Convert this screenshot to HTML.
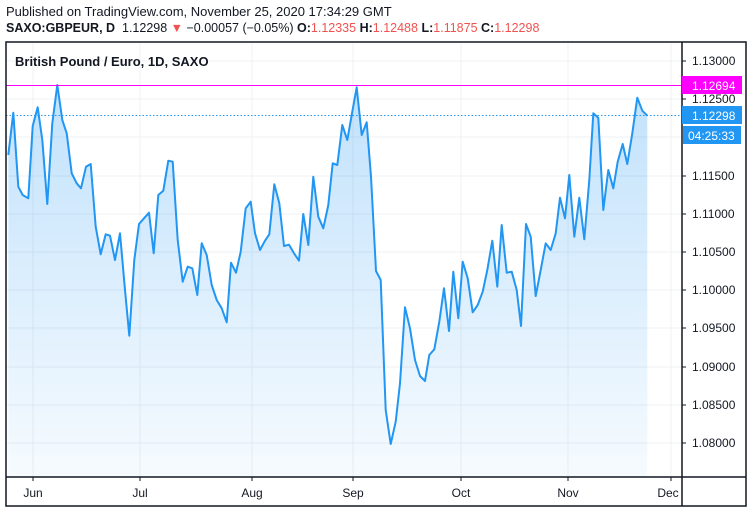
<!DOCTYPE html>
<html><head><meta charset="utf-8"><style>
body{margin:0;width:753px;height:513px;background:#fff;font-family:"Liberation Sans",sans-serif;overflow:hidden;position:relative}
.t{position:absolute;white-space:nowrap;color:#131722}
</style></head><body>
<div class="t" style="left:6px;top:4px;font-size:13px;">Published on TradingView.com, November 25, 2020 17:34:29 GMT</div>
<div class="t" style="left:6px;top:21px;font-size:12.5px;"><b>SAXO:GBPEUR, D</b>&nbsp; 1.12298 <span style="color:#ef5350">▼</span> −0.00057 (−0.05%) <b>O:</b><span style="color:#ef5350">1.12335</span> <b>H:</b><span style="color:#ef5350">1.12488</span> <b>L:</b><span style="color:#ef5350">1.11875</span> <b>C:</b><span style="color:#ef5350">1.12298</span></div>
<svg style="position:absolute;left:0;top:0" width="753" height="513" xmlns="http://www.w3.org/2000/svg">
<defs><linearGradient id="g" x1="0" y1="0" x2="0" y2="1"><stop offset="0" stop-color="#2196f3" stop-opacity="0.28"/><stop offset="1" stop-color="#2196f3" stop-opacity="0.04"/></linearGradient></defs>
<g stroke="#eef0f3" stroke-width="1">
<line x1="6" x2="682" y1="61" y2="61"/><line x1="6" x2="682" y1="99" y2="99"/><line x1="6" x2="682" y1="137" y2="137"/><line x1="6" x2="682" y1="176" y2="176"/><line x1="6" x2="682" y1="214" y2="214"/><line x1="6" x2="682" y1="252" y2="252"/><line x1="6" x2="682" y1="290" y2="290"/><line x1="6" x2="682" y1="328" y2="328"/><line x1="6" x2="682" y1="367" y2="367"/><line x1="6" x2="682" y1="405" y2="405"/><line x1="6" x2="682" y1="443" y2="443"/>
<line x1="33" x2="33" y1="42" y2="477"/><line x1="140" x2="140" y1="42" y2="477"/><line x1="252" x2="252" y1="42" y2="477"/><line x1="353" x2="353" y1="42" y2="477"/><line x1="461" x2="461" y1="42" y2="477"/><line x1="568" x2="568" y1="42" y2="477"/><line x1="671" x2="671" y1="42" y2="477"/>
</g>
<polygon fill="url(#g)" points="8.3,477 8.3,155 13.3,112.7 18.3,186.7 22.7,195 28.3,198.3 32.7,126 37.7,107.3 42.3,140 47.3,204 52.3,123.3 57.3,85 62.3,120 66.7,133.3 71.7,173.3 76.7,183.3 81,188.3 86,166.7 90.7,164 95.7,226.7 100.7,254.3 105.7,234.3 110,235.7 115,260 120,233.3 125,290 129.3,335.7 134.3,260 139,224 144,218.3 149,212.7 153.7,253.3 158.3,195 163.3,190.7 168.3,160.7 172.7,161.7 177.7,240 182.7,281.7 187.7,266.7 192.3,268.3 197.3,295 201.7,243.3 206.7,255 211.7,285 216.7,300 221.7,308.3 226.7,322.3 231,262.7 236,272.7 240.7,251.7 245.7,208.3 250.7,201.7 255,233.3 260,250 265,240.7 269.3,234.3 274.3,184.3 279.3,203.3 284,246 289,244.7 294,253.3 299,260.7 303.3,214 308.3,245 313.3,176.7 318.3,216.7 323.3,228.3 328.3,205 332.7,163.3 337.3,165 342.3,125 347.3,140 352.3,111.7 356.7,87.3 361.7,135 366.7,122.3 371,176.7 376,271 380.7,280 385.7,410 390.7,444 395.7,421.7 400,383.3 405,307.3 410,328.3 415,360 420,376 425,381 429.3,355 434.3,349.3 439.3,321.7 444,288.3 449,331 453.3,271.7 458.3,318.3 462.7,261.7 467.7,278.3 472.7,312.3 477.7,305 482.7,291.7 487.3,270 492.3,240.7 497.3,286.7 501.7,225 506.7,272.7 511.7,271.7 516.7,290 521,326 526,224 530.7,236.7 535.7,296 540.7,270 545.7,243.3 550.7,250 555.7,233.3 560,197.7 565,218.3 569.3,175 574.3,236.7 579.3,197.7 584.3,239.3 589.3,180 593.3,113.3 598.3,117.7 603.3,210 608.3,170 613.3,188.3 617.7,161.7 622.7,144 627.3,164 632.3,133.3 637.3,97.7 642.3,110.7 647.3,115.7 647.3,477"/>
<polyline fill="none" stroke="#2196f3" stroke-width="2" stroke-linejoin="round" points="8.3,155 13.3,112.7 18.3,186.7 22.7,195 28.3,198.3 32.7,126 37.7,107.3 42.3,140 47.3,204 52.3,123.3 57.3,85 62.3,120 66.7,133.3 71.7,173.3 76.7,183.3 81,188.3 86,166.7 90.7,164 95.7,226.7 100.7,254.3 105.7,234.3 110,235.7 115,260 120,233.3 125,290 129.3,335.7 134.3,260 139,224 144,218.3 149,212.7 153.7,253.3 158.3,195 163.3,190.7 168.3,160.7 172.7,161.7 177.7,240 182.7,281.7 187.7,266.7 192.3,268.3 197.3,295 201.7,243.3 206.7,255 211.7,285 216.7,300 221.7,308.3 226.7,322.3 231,262.7 236,272.7 240.7,251.7 245.7,208.3 250.7,201.7 255,233.3 260,250 265,240.7 269.3,234.3 274.3,184.3 279.3,203.3 284,246 289,244.7 294,253.3 299,260.7 303.3,214 308.3,245 313.3,176.7 318.3,216.7 323.3,228.3 328.3,205 332.7,163.3 337.3,165 342.3,125 347.3,140 352.3,111.7 356.7,87.3 361.7,135 366.7,122.3 371,176.7 376,271 380.7,280 385.7,410 390.7,444 395.7,421.7 400,383.3 405,307.3 410,328.3 415,360 420,376 425,381 429.3,355 434.3,349.3 439.3,321.7 444,288.3 449,331 453.3,271.7 458.3,318.3 462.7,261.7 467.7,278.3 472.7,312.3 477.7,305 482.7,291.7 487.3,270 492.3,240.7 497.3,286.7 501.7,225 506.7,272.7 511.7,271.7 516.7,290 521,326 526,224 530.7,236.7 535.7,296 540.7,270 545.7,243.3 550.7,250 555.7,233.3 560,197.7 565,218.3 569.3,175 574.3,236.7 579.3,197.7 584.3,239.3 589.3,180 593.3,113.3 598.3,117.7 603.3,210 608.3,170 613.3,188.3 617.7,161.7 622.7,144 627.3,164 632.3,133.3 637.3,97.7 642.3,110.7 647.3,115.7"/>
<rect x="6" y="85" width="676" height="1" fill="#ff00ff"/>
<line x1="6" x2="682" y1="115.5" y2="115.5" stroke="#2196f3" stroke-width="1" stroke-dasharray="1.5,2"/>
<rect x="6" y="42" width="740" height="464" fill="none" stroke="#131722" stroke-width="1.5"/>
<line x1="6" x2="746" y1="477" y2="477" stroke="#131722" stroke-width="1.5"/>
<line x1="682" x2="682" y1="42" y2="506" stroke="#131722" stroke-width="1.5"/>
<g stroke="#131722" stroke-width="1"><line x1="682" x2="686" y1="61" y2="61"/><line x1="682" x2="686" y1="99" y2="99"/><line x1="682" x2="686" y1="176" y2="176"/><line x1="682" x2="686" y1="214" y2="214"/><line x1="682" x2="686" y1="252" y2="252"/><line x1="682" x2="686" y1="290" y2="290"/><line x1="682" x2="686" y1="328" y2="328"/><line x1="682" x2="686" y1="367" y2="367"/><line x1="682" x2="686" y1="405" y2="405"/><line x1="682" x2="686" y1="443" y2="443"/>
<line x1="33" x2="33" y1="477" y2="481"/><line x1="140" x2="140" y1="477" y2="481"/><line x1="252" x2="252" y1="477" y2="481"/><line x1="353" x2="353" y1="477" y2="481"/><line x1="461" x2="461" y1="477" y2="481"/><line x1="568" x2="568" y1="477" y2="481"/><line x1="671" x2="671" y1="477" y2="481"/></g>
<rect x="682" y="76" width="60" height="18" fill="#ff00ff"/>
<rect x="682" y="106" width="60" height="18" fill="#2196f3"/>
<rect x="683" y="126" width="58" height="18" fill="#2196f3"/>
<g font-family="Liberation Sans, sans-serif" font-size="12" fill="#131722">
<text x="692" y="65">1.13000</text><text x="692" y="103">1.12500</text><text x="692" y="180">1.11500</text><text x="692" y="218">1.11000</text><text x="692" y="256">1.10500</text><text x="692" y="294">1.10000</text><text x="692" y="332">1.09500</text><text x="692" y="371">1.09000</text><text x="692" y="409">1.08500</text><text x="692" y="447">1.08000</text>
<text x="692" y="90" fill="#fff">1.12694</text><text x="692" y="120" fill="#fff">1.12298</text><text x="688" y="140" fill="#fff">04:25:33</text>
<g text-anchor="middle"><text x="33" y="497">Jun</text><text x="140" y="497">Jul</text><text x="252" y="497">Aug</text><text x="353" y="497">Sep</text><text x="461" y="497">Oct</text><text x="568" y="497">Nov</text><text x="668" y="497">Dec</text></g>
<text x="15" y="66" font-weight="bold" font-size="13">British Pound / Euro, 1D, SAXO</text>
</g>
</svg>
</body></html>
